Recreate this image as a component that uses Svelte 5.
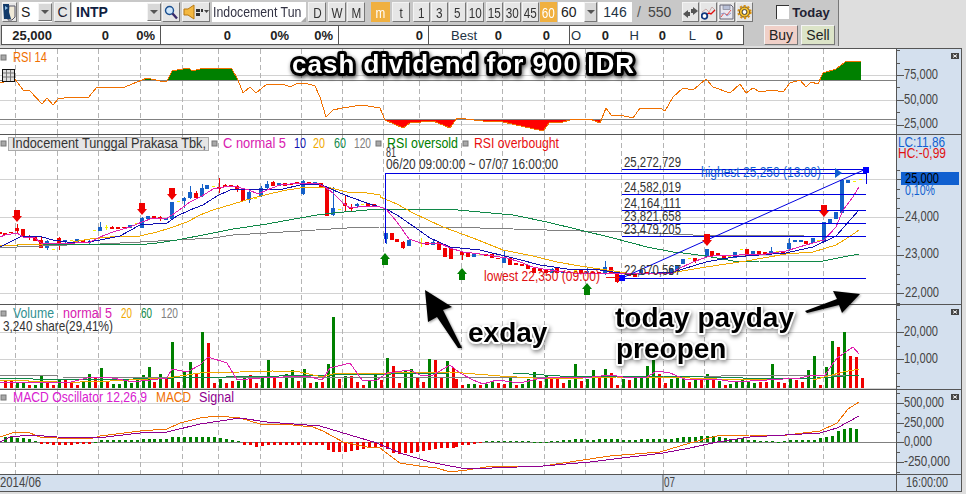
<script>
  const STEP = 17.9;
  // helpers: reference data is kept in 3x-crop coordinates with an origin
  const line = (ox, oy, a) => {
    const out = [];
    for (let i = 0; i < a.length; i += 2) out.push(`${Math.round(ox + a[i] / 3)},${Math.round(oy + a[i + 1] / 3)}`);
    return out;
  };
  const join = (...parts) => parts.flat().join(' ');

  const gridX = [15, 57, 98, 140, 182, 218, 260, 301, 342, 383, 419, 461, 502, 544, 585, 621, 663, 704, 746, 788, 823];

  // ---------- RSI ----------
  const rsiPts = [
    ...line(0, 0, [0,250,45,238,70,270,90,273,125,312,142,295,160,316,175,296,210,292,235,290,265,295,290,260,330,261,375,261,410,245,440,233,480,243,500,242,515,212,565,203,580,212,610,205,695,208,715,240,730,280,750,262,767,278,800,252,830,255,850,253,870,262,895,250,915,250,945,258,960,290,978,350,1000,330,1025,323,1085,315,1140,325,1155,360,1210,383,1230,368,1300,362,1350,383,1370,355,1449,362]),
    ...line(483, 0, [60,365,180,392,200,365,230,368,270,358,320,358,350,370,368,325,385,345,410,345,450,355,470,323,530,325,545,333,570,290,600,265,630,270,668,238,690,262,740,280,770,252,790,278,810,265,830,277,870,270,900,277,920,248,950,240,970,260,985,247,1005,252,1020,218,1060,208,1085,185,1133,183])
  ];
  const rsiLine = rsiPts.join(' ');
  const rsiHigh = `0,80 ${rsiLine} 861,80`;
  const rsiLow = `0,119 ${rsiLine} 861,119`;

  // ---------- candles ----------
  const cz3 = [
    [0,305,312,,,'r'],[16,310,316,,,'r'],[34,306,308,,,'r'],[52,295,302,282,310,'r'],[70,297,322,,,'r'],[88,320,325,315,330,'r'],[106,321,332,,,'r'],[124,330,353,322,353,'r'],[142,333,353,330,360,'b'],[160,357,358,,,'y'],[178,325,340,322,360,'r'],[196,329,335,329,340,'b'],[214,330,331,,,'y'],[232,328,335,,,'b'],[250,330,337,,,'r'],[268,335,340,330,345,'b'],[283,300,301,,,'y'],[301,291,303,277,303,'b'],[319,291,293,285,300,'y'],[337,290,296,288,298,'r'],[355,292,296,,,'r'],[373,291,294,,,'r'],[391,285,293,,,'b'],[409,280,281,,,'y'],[427,264,293,262,295,'b'],[445,258,268,,,'b'],[463,259,265,,,'r'],[481,260,268,258,272,'r'],[499,264,270,,,'b'],[517,217,268,,,'b'],[533,214,215,,,'y'],[551,203,213,200,235,'b'],[569,187,205,168,207,'b'],[587,188,203,183,205,'r'],[605,174,199,163,200,'b'],[622,165,176,,,'b'],[640,167,168,,,'y'],[658,170,177,143,190,'r'],[676,165,170,161,172,'r'],[694,165,168,,,'r'],[712,167,180,165,186,'r'],[730,177,213,,,'r'],[748,186,210,182,218,'b'],[766,204,205,,,'y'],[784,174,197,168,200,'b'],[800,162,175,153,177,'b'],[818,157,167,153,169,'r'],[836,160,168,,,'b'],[854,160,167,,,'r'],[872,161,163,,,'r'],[890,155,157,,,'r'],[908,153,193,150,195,'b'],[926,155,162,,,'r'],[944,157,162,,,'b'],[962,160,175,,,'r'],[980,172,257,,,'r'],[998,235,255,172,258,'b'],[1016,238,239,,,'y'],[1034,220,228,195,245,'r'],[1052,232,236,222,243,'r'],[1070,222,228,218,232,'b'],[1086,222,223,,,'y'],[1104,220,228,,,'r'],[1122,222,232,,,'r']
  ];
  const cz4 = [
    [17,310,327,308,342,'b'],[35,308,330,,,'r'],[52,328,337,,,'r'],[70,335,355,333,356,'r'],[88,330,348,,,'b'],[124,338,339,324,352,'y'],[142,335,345,,,'r'],[160,335,345,330,345,'b'],[178,337,360,,,'r'],[195,355,382,,,'r'],[212,355,388,350,388,'r'],[247,365,375,365,390,'r'],[265,370,380,,,'r'],[283,372,380,,,'b'],[301,372,373,,,'y'],[319,372,377,,,'r'],[337,372,385,,,'r'],[355,385,386,,,'r'],[373,380,398,362,400,'b'],[391,383,405,,,'r'],[409,400,405,,,'r'],[427,401,407,,,'r'],[445,405,418,,,'r'],[462,415,430,,,'r'],[480,418,422,,,'r'],[498,420,430,,,'r'],[516,418,430,413,430,'b'],[532,414,430,,,'r'],[550,422,430,,,'b'],[568,425,426,,,'y'],[586,420,430,,,'y'],[604,420,431,,,'r'],[622,423,430,415,430,'b'],[640,425,432,,,'r'],[658,425,432,,,'r'],[676,410,432,392,435,'b'],[694,412,430,,,'r'],[712,428,455,428,458,'r'],[748,430,437,,,'r'],[766,430,442,,,'r'],[784,420,435,,,'b'],[802,425,430,,,'r'],[820,425,430,,,'b'],[838,427,429,,,'r'],[855,425,432,,,'r'],[873,415,435,,,'b']
  ];
  const cz5 = [
    [32,405,422,,,'b'],[50,387,403,,,'b'],[68,385,386,,,'y'],[86,385,392,385,400,'r'],[104,375,376,,,'y'],[122,357,380,,,'b'],[137,362,378,,,'r'],[155,370,378,,,'r'],[173,378,385,,,'r'],[190,378,379,,,'y'],[208,365,385,,,'b'],[226,358,359,,,'y'],[244,358,378,,,'r'],[262,362,375,,,'b'],[280,362,372,,,'r'],[298,367,372,,,'r'],[316,362,372,350,372,'b'],[334,362,363,,,'y'],[352,365,370,,,'r'],[370,340,358,325,362,'b'],[388,330,336,,,'b'],[404,330,335,,,'b'],[421,333,342,,,'r'],[440,325,340,,,'b'],[457,330,331,,,'y'],[475,275,335,,,'b'],[493,267,280,,,'b'],[511,245,268,,,'b'],[529,150,250,,,'b'],[547,150,160,,,'b'],[565,152,153,,,'y'],[583,148,149,,,'y']
  ];
  const candleColor = { r: '#f00000', b: '#1560c8', y: '#f4f000' };
  const toCandle = (ox) => ([x, t, b, wt, wb, c]) => {
    const cx = Math.round(ox + x / 3);
    const top = Math.round(130 + t / 3);
    const bot = Math.max(top + 1, Math.round(130 + b / 3));
    return {
      x: cx, top, h: bot - top,
      wt: Math.round(130 + (wt ?? t) / 3),
      wb: Math.round(130 + (wb ?? b) / 3),
      fill: candleColor[c], doji: c === 'y'
    };
  };
  const candles = [...cz3.map(toCandle(0)), ...cz4.map(toCandle(380)), ...cz5.map(toCandle(666))];

  const ma5 = join(
    line(0,130,[0,322,15,315,50,308,70,320,106,325,124,338,150,340,178,340,200,342,250,335,270,335,300,320,340,305,390,290,427,275,460,265,500,265,517,255,545,235,569,215,605,197,640,178,690,167,712,172,748,180,775,192,800,180,840,165,900,160,950,160,975,172,1000,190,1030,220,1050,235,1075,230,1100,228,1140,232]),
    line(380,130,[17,237,50,275,88,328,124,338,160,340,178,340,210,355,250,365,300,373,340,378,380,385,420,395,460,410,490,418,530,422,580,428,640,428,700,428,760,432,800,430,880,428]),
    line(666,130,[30,420,80,395,122,380,160,375,220,375,300,372,360,362,400,350,440,340,475,330,510,290,530,240,560,200,580,172])
  );
  const ma10 = join(
    line(0,130,[0,352,30,335,60,322,90,318,125,322,160,330,200,335,265,335,300,330,360,318,420,285,500,280,530,258,570,240,610,225,650,198,690,180,720,178,850,178,900,165,960,162,1000,180,1050,200,1100,218,1150,235]),
    line(380,130,[17,237,50,255,100,288,150,325,210,350,300,360,400,385,480,405,560,418,660,420,720,428,790,432,880,425]),
    line(666,130,[50,418,120,395,200,380,280,375,360,368,440,350,510,318,580,240])
  );
  const ma20 = join(
    line(0,130,[0,345,50,345,130,343,200,338,270,328,330,320,420,318,470,305,510,295,560,275,600,255,640,240,700,222,760,205,820,190,860,180,920,172,980,172,1040,185,1100,190,1140,195]),
    line(380,130,[0,200,50,222,100,250,190,290,280,325,370,360,460,378,530,395,600,408,660,418,740,428,820,432,880,428]),
    line(666,130,[30,425,120,410,240,392,360,372,440,365,510,345,550,320,580,300])
  );
  const ma60 = join(
    line(0,130,[0,347,110,343,200,343,415,345,470,340,530,330,610,315,700,298,800,282,900,265,950,255,1000,248,1100,240]),
    line(380,130,[0,237,200,238,300,245,400,255,500,275,600,300,700,325,800,350,880,365]),
    line(666,130,[50,370,120,378,200,392,280,392,400,397,470,392,530,382,580,372])
  );
  const ma120 = join(
    line(0,130,[0,352,50,350,200,345,300,342,420,335,530,330,640,325,700,315,800,310,900,303,1040,295]),
    line(380,130,[0,292,200,292,400,298,600,302,730,307,880,312]),
    line(666,130,[80,315,415,315])
  );

  const fibY = [169, 194, 210, 223, 236, 278];
  const fibLabels = [
    ['25,272,729', 167], ['24,582,019', 192], ['24,164,111', 208], ['23,821,658', 221], ['23,479,205', 234], ['22,670,567', 275]
  ];
  const downArrows = [[17,210],[142,203],[172,188],[707,234],[824,205]];
  const upArrows = [[385,253],[462,268],[587,283]];

  // ---------- volume ----------
  const vol6 = [-243,-240,248,248,-255,255,228,-245,-255,240,-240,-248,-255,245,222,-230,204,-245,252,252,240,248,240,225,201,-245,222,-230,126,-245,215,186,-222,96,-129,-248,236,-248,-243,243,228,-225,-250,232,180,-228,-245,222,210,-242,207,-250,245,-245,192,51,-236,228,-228,-245,-255,240,225,-240,174,-198,-248,213,208,-232,-245,177,-180,-230,183,-204];
  const vol7 = [-237,-255,252,252,-255,252,243,-250,-252,234,-255,252,237,216,-243,225,-236,-234,-248,240,192,-243,237,210,-230,207,-220,-255,237,-240,232,234,198,180,-222,-248,237,234,230,-245,240,-240,222,-240,243,-255,252,243,240,245,248,-245,-245,192,-246,-250,237,-240,-245,210,168,-255,201,123,-141,96,-168,-171,-234];
  const toBar = (ox, x0) => (v, i) => ({
    x: Math.round(ox + (x0 + i * STEP) / 3) - 1,
    y: Math.round(300 + Math.abs(v) / 3),
    h: Math.round((264 - Math.abs(v)) / 3),
    fill: v > 0 ? '#008000' : '#f00000'
  });
  const volBars = [...vol6.map(toBar(0, 16)), ...vol7.map(toBar(450, 18))];

  const vma5 = join(
    line(0,300,[0,245,60,250,130,245,200,250,260,235,320,230,400,245,450,240,500,235,517,207,560,217,600,195,625,170,680,190,710,240,780,235,850,230,920,228,965,240,990,205,1050,190,1085,240,1130,240,1160,220,1230,210,1260,225,1300,225,1350,195]),
    line(450,300,[30,218,70,240,100,252,140,240,210,248,260,238,320,230,400,235,480,225,540,235,590,230,620,214,660,220,710,240,800,238,850,245,950,240,1050,235,1090,225,1125,225,1160,175,1210,140,1228,162])
  );
  const vma20 = join(
    line(0,300,[0,240,170,247,240,245,330,243,500,235,600,220,720,215,820,212,900,215,965,232,1000,223,1350,215]),
    line(450,300,[150,228,300,238,500,232,640,232,800,237,1000,240,1090,240,1180,215,1228,207])
  );
  const vma60 = join(
    line(0,300,[0,235,100,237,400,238,520,235,1000,225,1350,220]),
    line(450,300,[190,220,330,228,640,228,1000,237,1100,235,1228,225])
  );
  const vma120 = join(
    line(0,300,[0,225,170,224,170,230,1350,235]),
    line(450,300,[1228,226])
  );

  // ---------- MACD ----------
  const hist6 = [411,412,414,414,418,423,431,432,434,434,434,434,432,432,432,426,420,420,420,420,420,420,420,417,417,418,418,418,412,412,411,411,411,411,411,411,413,417,419,423,435,435,441,437,434,434,434,434,434,434,434,434,434,434,451,455,455,455,452,450,447,444,442,441,447,458,461,459,459,456,453,449,447,443,444,444];
  const hist7 = [441,436,434,431,429,423,423,423,423,423,423,423,423,425,426,425,423,423,421,419,418,417,419,420,418,418,417,417,419,419,419,418,418,418,418,418,418,413,412,411,410,408,408,408,411,413,416,416,414,419,420,422,424,424,425,424,421,420,420,421,421,414,411,408,393,387,384,387];
  const toHist = (ox, x0) => (v, i) => {
    const top = Math.round(300 + Math.min(v, 427) / 3);
    const bot = Math.round(300 + Math.max(v, 427) / 3);
    return { x: Math.round(ox + (x0 + i * STEP) / 3) - 1, y: top, h: Math.max(1, bot - top), fill: v < 427 ? '#008000' : '#f00000' };
  };
  const histBars = [...hist6.map(toHist(0, 16)), ...hist7.map(toHist(450, 18))];
  const macd = join(
    line(0,300,[0,410,45,397,90,400,120,410,170,415,270,418,300,408,420,393,500,387,540,370,600,355,650,347,720,355,780,373,880,375,940,380,970,393,1030,425,1100,442,1140,445,1200,490,1258,497,1310,503,1350,515]),
    line(450,300,[50,510,130,498,280,497,400,480,480,468,630,455,720,430,800,408,900,405,1010,405,1110,393,1160,368,1195,328,1228,307])
  );
  const signal = join(
    line(0,300,[0,425,30,412,90,406,170,412,290,415,420,400,500,395,600,372,720,355,800,365,960,377,1050,405,1130,430,1200,460,1290,485,1350,498]),
    line(450,300,[50,507,280,497,420,485,640,460,720,445,800,425,900,410,1110,400,1160,385,1228,348])
  );

  // ---------- labels ----------
  const rsiLegend = [[13,62,34,'#f07000','RSI 14']];
  const priceLegend = [
    [12,148,194,'#333','Indocement Tunggal Prakasa Tbk,'],
    [223,148,63,'#d820b0','C normal 5'],[294,148,12,'#1010b0','10'],[313,148,12,'#f0a800','20'],[334,148,12,'#108848','60'],[354,148,17,'#808080','120'],
    [387,148,71,'#008000','RSI oversold'],[474,148,85,'#e81010','RSI overbought'],
    [386,157,10,'#333','81'],[386,169,172,'#333','06/20 09:00:00 ~ 07/07 16:00:00']
  ];
  const volLegend = [
    [13,318,41,'#309090','Volume'],[63,318,49,'#d820b0','normal 5'],[121,318,11,'#f0a800','20'],[141,318,11,'#108848','60'],[161,318,17,'#808080','120'],
    [3,331,110,'#333','3,240 share(29,41%)']
  ];
  const macdLegend = [[13,402,134,'#d820d0','MACD Oscillator 12,26,9'],[156,402,35,'#f07000','MACD'],[199,402,35,'#900090','Signal']];
  const legendDots = { rsi: [[1,55]], price: [[1,141],[212,141],[376,141],[463,141]], vol: [[1,311]], macd: [[1,395]] };

  const axisTicks = (majors, step, top, bottom) => {
    const out = [];
    const m0 = majors[0];
    for (let y = m0 - Math.floor((m0 - top) / step) * step; y < bottom; y += step) {
      const isMajor = majors.some((v) => Math.abs(v - y) < step / 2);
      out.push({ y: Math.round(y), len: isMajor ? 7 : 3 });
    }
    return out;
  };
  const axes = {
    rsi: { ticks: axisTicks([75, 100, 124.5], 12.4, 49, 134), labels: [[904,79,34,'75,000'],[904,104,34,'50,000'],[904,128,34,'25,000']] },
    price: { ticks: axisTicks([179, 217, 255, 293], 9.5, 165, 304), labels: [[905,221,34,'24,000'],[905,258,34,'23,000'],[905,297,34,'22,000']] },
    vol: { ticks: axisTicks([332, 359], 13.5, 305, 389), labels: [[904,336,34,'20,000'],[904,363,34,'10,000']] },
    macd: { ticks: axisTicks([403, 423, 442, 462], 9.8, 390, 474), labels: [[904,407,40,'500,000'],[904,427,40,'250,000'],[904,446,28,'0,000'],[904,466,46,'-250,000']] }
  };

  // ---------- toolbar ----------
  const intervals = [
    ['D',308,18],['W',328,18],['M',347,18],['m',371,19,true],['t',392,18],['1',413,17],['3',431,17],['5',449,17],
    ['10',467,17],['15',486,17],['30',504,17],['45',522,17],['60',540,17,true]
  ].map(([t, x, w, on], i, all) => ({ t, w, on, gap: i ? x - all[i - 1][1] - all[i - 1][2] : 0 }));

  const quote = [
    { w: 159, items: [[50,'25,000'],[57,'0'],[46,'0%']] },
    { w: 178, items: [[70,'0'],[58,'0%'],[44,'0%']] },
    { w: 90, items: [[84,'0']] },
    { w: 141, items: [[48,'Best',1],[25,'0'],[48,'0']] },
    { w: 173, items: [[11,'O',1],[28,'0'],[30,'H',1],[27,'0'],[30,'L',1],[27,'0']] }
  ];
</script>

{#snippet texts(list)}
  {#each list as [x, y, w, color, label]}
    <text {x} {y} textLength={w} lengthAdjust="spacingAndGlyphs" fill={color}>{label}</text>
  {/each}
{/snippet}

{#snippet grid(top, h, ys)}
  {#each ys as y}
    <line x1="0" x2="896" y1={y + 0.5} y2={y + 0.5} class="hgrid" />
  {/each}
  {#each gridX as x}
    <line x1={x + 0.5} x2={x + 0.5} y1={top} y2={top + h} class="vgrid" />
  {/each}
{/snippet}

{#snippet dots(list)}
  {#each list as [x, y]}
    <rect {x} {y} width="5" height="5" class="dot" />
  {/each}
{/snippet}

{#snippet axis(top, h, data, closeY)}
  <svg class="axis" width="64" height={h} viewBox="897 {top} 64 {h}">
    {#each data.ticks as t}
      <line x1="897" x2={897 + t.len} y1={t.y + 0.5} y2={t.y + 0.5} class="tick" />
    {/each}
    {#each data.labels as [x, y, w, label]}
      <text {x} {y} textLength={w} lengthAdjust="spacingAndGlyphs" fill="#444">{label}</text>
    {/each}
    {#if closeY}
      <rect x="951" y={closeY} width="8" height="6" fill="#444" />
      <path d="M953 {closeY + 1.5}l4 3m0-3l-4 3" stroke="#fff" stroke-width="1" />
    {/if}
  </svg>
{/snippet}

<div class="app">
  <header class="toolbar">
    <div class="row1">
      <button class="btn ic1" aria-label="profile">
        <svg width="13" height="18" viewBox="0 0 13 18">
          <path d="M6 3h6v11l-3 3H5z" fill="#f0ead8" stroke="#556" />
          <path d="M0 1h6v8l2 7H1z" fill="#123a6a" />
          <path d="M2 3l3 2-3 2z" fill="#8fc0e8" />
        </svg>
      </button>
      <div class="field sbox">
        <span class="stype">S</span>
        <button class="btn drop" aria-label="open"><i class="caret"></i></button>
      </div>
      <button class="btn cbtn">C</button>
      <div class="field code">
        <b>INTP</b>
        <button class="btn drop" aria-label="open"><i class="caret"></i></button>
      </div>
      <button class="btn search" aria-label="search">
        <svg width="14" height="15" viewBox="0 0 14 15">
          <circle cx="5.5" cy="5.5" r="4" fill="#cfe6fa" stroke="#1a4f90" stroke-width="1.4" />
          <path d="M8.5 8.5l4.5 5" stroke="#3a2a6a" stroke-width="2.4" />
        </svg>
      </button>
      <button class="btn speaker" aria-label="sound">
        <svg width="26" height="16" viewBox="0 0 26 16">
          <path d="M1 5h4l6-4v14l-6-4H1z" fill="#f4b840" stroke="#b87810" />
          <rect x="13" y="5" width="4" height="3" fill="#333" />
          <rect x="13" y="9" width="4" height="3" fill="#333" />
          <rect x="18" y="5" width="2" height="3" fill="#333" />
          <path d="M21 6h5l-2.5 3z" fill="#444" />
        </svg>
      </button>
      <div class="field name"><span>Indocement Tun</span><i class="corner"></i></div>
      <div class="intervals">
        {#each intervals as it}
          <button class="btn int" class:on={it.on} style:width="{it.w}px" style:margin-left="{it.gap}px"><span>{it.t}</span></button>
        {/each}
      </div>
      <div class="field count">60</div>
      <button class="btn drop wide" aria-label="open"><i class="caret"></i></button>
      <div class="field total">146</div>
      <span class="slash">/</span>
      <span class="max">550</span>
      <div class="tools">
        <button class="btn tool" aria-label="arrows">
          <svg width="15" height="15" viewBox="0 0 15 15">
            <path d="M0 9l5-4v2h2v4H5v2zM15 6l-5-4v2H8v4h2v2z" fill="#555" />
          </svg>
        </button>
        <button class="btn tool" aria-label="chart">
          <svg width="15" height="16" viewBox="0 0 15 16">
            <path d="M1 8l4-3 3 3 3-5 3 3" fill="none" stroke="#c8a8a8" />
            <path d="M5 11l3-2 2 1 4-4" fill="none" stroke="#e01010" stroke-width="1.4" />
            <circle cx="3.5" cy="12" r="2.8" fill="#fff" stroke="#103a80" stroke-width="1.8" />
          </svg>
        </button>
        <button class="btn tool" aria-label="save">
          <svg width="15" height="16" viewBox="0 0 15 16">
            <path d="M1 1h11l2 2v12H1z" fill="#e8e8f0" stroke="#667" />
            <rect x="4" y="1.5" width="7" height="4" fill="#b8c0d8" stroke="#778" stroke-width=".6" />
            <path d="M2 13l3-4 3 2 4-5" fill="none" stroke="#e05050" />
            <path d="M2 10l3-1 3 3 4-3" fill="none" stroke="#90a0d0" />
          </svg>
        </button>
        <button class="btn tool" aria-label="settings">
          <svg width="16" height="16" viewBox="0 0 16 16">
            <circle cx="8" cy="8" r="5.5" fill="#f4c030" stroke="#604010" stroke-width="1" />
            <circle cx="8" cy="8" r="6.6" fill="none" stroke="#d89010" stroke-width="2" stroke-dasharray="2.2 2" />
            <circle cx="8" cy="8" r="2.6" fill="#fff" stroke="#333" />
          </svg>
        </button>
      </div>
      <label class="today"><i class="box"></i>Today</label>
    </div>
    <div class="row2">
      <div class="quote">
        {#each quote as g}
          <div class="qgroup" style:width="{g.w}px">
            {#each g.items as [w, t, light]}
              <span class:light style:width="{w}px">{t}</span>
            {/each}
          </div>
        {/each}
      </div>
      <button class="btn order buy">Buy</button>
      <button class="btn order sell">Sell</button>
    </div>
  </header>

  <main class="chart">
    <section class="pane">
      <svg class="plot" width="896" height="85" viewBox="0 49 896 85">
        {@render grid(49, 85, [75, 100, 124])}
        <clipPath id="hi"><rect x="0" y="49" width="896" height="31" /></clipPath>
        <clipPath id="lo"><rect x="0" y="119" width="896" height="15" /></clipPath>
        <polygon points={rsiHigh} fill="#008000" clip-path="url(#hi)" shape-rendering="crispEdges" />
        <polygon points={rsiLow} fill="#ff0000" clip-path="url(#lo)" shape-rendering="crispEdges" />
        <line x1="0" x2="896" y1="80.5" y2="80.5" class="level" />
        <line x1="0" x2="896" y1="119.5" y2="119.5" class="level" />
        <polyline points={rsiLine} class="ln" stroke="#f07000" />
        {@render dots(legendDots.rsi)}
        {@render texts(rsiLegend)}
        <g class="tableicon">
          <rect x="2.5" y="69.5" width="12" height="12" fill="#e0e0e0" stroke="#111" />
          <path d="M3 73h11M6.5 70v11M10.5 70v11M3 77h11" stroke="#777" fill="none" />
        </g>
      </svg>
      {@render axis(49, 85, axes.rsi, 53)}
    </section>

    <section class="pane">
      <svg class="plot" width="896" height="169" viewBox="0 135 896 169">
        {@render grid(135, 169, [179, 217, 255, 293])}
        {#each candles as c}
          <rect x={c.x} y={c.wt} width="1" height={Math.max(1, c.wb - c.wt)} fill={c.fill} shape-rendering="crispEdges" />
          <rect x={c.x - (c.doji ? 1 : 2)} y={c.top} width={c.doji ? 3 : 4} height={c.h} fill={c.fill} shape-rendering="crispEdges" />
        {/each}
        <polyline points={ma120} class="ln" stroke="#808080" />
        <polyline points={ma60} class="ln" stroke="#108848" />
        <polyline points={ma20} class="ln" stroke="#f0a800" />
        <polyline points={ma10} class="ln" stroke="#1010b0" />
        <polyline points={ma5} class="ln" stroke="#e020b0" />

        <polyline points="385,243 385,173 866,173" class="fib" />
        {#each fibY as y}
          <line x1="622" x2="866" y1={y + 0.5} y2={y + 0.5} class="fib" />
        {/each}
        <line x1="622" x2="866" y1="278" y2="169" stroke="#0000e0" />
        <line x1="866.5" x2="866.5" y1="169" y2="184" class="fib" />
        <rect x="619" y="275" width="6" height="6" fill="#0000ff" />
        <rect x="863" y="167" width="6" height="6" fill="#0000ff" />
        <path d="M835 168l7 5-7 5z" fill="#1060d0" />
        <line x1="606" x2="620" y1="277.5" y2="277.5" stroke="#e81010" />

        {#each downArrows as [x, y]}
          <path d="M{x - 3} {y}h6v6h2l-5 6-5-6h2z" fill="#f00000" />
        {/each}
        {#each upArrows as [x, y]}
          <path d="M{x} {y}l5 6h-2v6h-6v-6h-2z" fill="#008000" />
        {/each}

        {@render dots(legendDots.price)}
        <rect x="8.5" y="137.5" width="200" height="13" fill="#e6e6e6" stroke="#aaa" />
        {@render texts(priceLegend)}
        {#each fibLabels as [t, y]}
          <text x="624" {y} textLength="57" lengthAdjust="spacingAndGlyphs" fill="#333">{t}</text>
        {/each}
        <text x="701" y="177" textLength="120" lengthAdjust="spacingAndGlyphs" fill="#1060d0">highest 25,250 (13:00)</text>
        <text x="484" y="281" textLength="116" lengthAdjust="spacingAndGlyphs" fill="#e01010">lowest 22,350 (09:00)</text>
      </svg>
      <svg class="axis" width="64" height="169" viewBox="897 135 64 169">
        {#each axes.price.ticks as t}
          <line x1="897" x2={897 + t.len} y1={t.y + 0.5} y2={t.y + 0.5} class="tick" />
        {/each}
        {#each axes.price.labels as [x, y, w, label]}
          <text {x} {y} textLength={w} lengthAdjust="spacingAndGlyphs" fill="#444">{label}</text>
        {/each}
        <text x="898" y="147" textLength="47" lengthAdjust="spacingAndGlyphs" fill="#1060d0">LC:11,86</text>
        <text x="898" y="158" textLength="48" lengthAdjust="spacingAndGlyphs" fill="#e01010">HC:-0,99</text>
        <rect x="901" y="172" width="58" height="13" fill="#1060d0" />
        <text x="905" y="183" textLength="34" lengthAdjust="spacingAndGlyphs" fill="#000">25,000</text>
        <text x="905" y="195" textLength="30" lengthAdjust="spacingAndGlyphs" fill="#1060d0">0,10%</text>
      </svg>
    </section>

    <section class="pane">
      <svg class="plot" width="896" height="84" viewBox="0 305 896 84">
        {@render grid(305, 84, [332, 359, 388])}
        {#each volBars as b}
          <rect x={b.x} y={b.y} width="3" height={b.h} fill={b.fill} shape-rendering="crispEdges" />
        {/each}
        <polyline points={vma120} class="ln" stroke="#808080" />
        <polyline points={vma60} class="ln" stroke="#108848" />
        <polyline points={vma20} class="ln" stroke="#f0a800" />
        <polyline points={vma5} class="ln" stroke="#e020b0" />
        {@render dots(legendDots.vol)}
        {@render texts(volLegend)}
      </svg>
      {@render axis(305, 84, axes.vol, 309)}
    </section>

    <section class="pane">
      <svg class="plot" width="896" height="84" viewBox="0 390 896 84">
        {@render grid(390, 84, [403, 423, 462])}
        <line x1="0" x2="896" y1="442.5" y2="442.5" class="level" />
        {#each histBars as b}
          <rect x={b.x} y={b.y} width="3" height={b.h} fill={b.fill} shape-rendering="crispEdges" />
        {/each}
        <polyline points={macd} class="ln" stroke="#f07000" />
        <polyline points={signal} class="ln" stroke="#900090" />
        {@render dots(legendDots.macd)}
        {@render texts(macdLegend)}
      </svg>
      {@render axis(390, 84, axes.macd, 394)}
    </section>

    <section class="pane timerow">
      <svg class="plot" width="896" height="16" viewBox="0 475 896 16">
        <text x="0" y="487" textLength="41" lengthAdjust="spacingAndGlyphs" fill="#444">2014/06</text>
        <line x1="663" x2="663" y1="475" y2="491" stroke="#555" />
        <text x="664" y="487" textLength="11" lengthAdjust="spacingAndGlyphs" fill="#444">07</text>
      </svg>
      <svg class="axis" width="64" height="16" viewBox="897 475 64 16">
        <text x="906" y="487" textLength="42" lengthAdjust="spacingAndGlyphs" fill="#444">16:00:00</text>
      </svg>
    </section>
  </main>

  <svg class="notes" width="966" height="494" viewBox="0 0 966 494">
    <text x="292" y="73" textLength="342" lengthAdjust="spacing" class="headline">cash dividend for 900 IDR</text>
    <path d="M425 290l27 17-9 3 19 38h-4l-21-31-9 5z" class="pointer" />
    <path d="M860 294l-27-3 4 8-32 12 2 2 32-8 3 8z" class="pointer" />
    <text x="468" y="342" class="note">exday</text>
    <text x="615" y="327" class="note">today payday</text>
    <text x="616" y="358" class="note">preopen</text>
  </svg>
</div>

<style>
  :global(body) {
    margin: 0;
    background: #dedede;
  }
  .app {
    position: relative;
    width: 966px;
    height: 494px;
    overflow: hidden;
    font-family: "Liberation Sans", Arial, sans-serif;
    color: #222;
  }
  button {
    font: inherit;
    color: inherit;
    padding: 0;
    margin: 0;
  }
  .toolbar {
    box-sizing: border-box;
    width: 839px;
    height: 46px;
    padding-top: 2px;
    background: #c8c8c8;
    border-right: 1px solid #777;
  }
  .row1 {
    display: flex;
    align-items: stretch;
    height: 20px;
    font-size: 14px;
  }
  .btn {
    box-sizing: border-box;
    display: flex;
    align-items: center;
    justify-content: center;
    background: #e6e6e6;
    border: 1px solid;
    border-color: #f4f4f4 #777 #777 #f4f4f4;
  }
  .field {
    box-sizing: border-box;
    display: flex;
    align-items: center;
    background: #fff;
    position: relative;
  }
  .ic1 { width: 15px; margin-left: 2px; }
  .sbox { width: 33px; margin-left: 2px; padding-left: 2px; }
  .stype { flex: 1; }
  .drop { width: 14px; height: 18px; background: #d8d8d8; }
  .caret {
    width: 0;
    height: 0;
    border: 4px solid transparent;
    border-top: 4px solid #555;
    border-bottom: 0;
  }
  .cbtn { width: 17px; margin-left: 2px; color: #223; }
  .code { width: 89px; margin-left: 1px; padding-left: 4px; }
  .code b { flex: 1; color: #102040; }
  .search { width: 18px; margin-left: 1px; }
  .speaker { width: 28px; margin-left: 2px; }
  .name {
    width: 94px;
    margin-left: 2px;
    padding-left: 1px;
    white-space: nowrap;
    overflow: hidden;
    font-size: 14px;
    color: #334;
  }
  .name span {
    display: inline-block;
    transform: scaleX(0.88);
    transform-origin: left center;
  }
  .corner {
    position: absolute;
    right: 0;
    bottom: 0;
    border-left: 5px solid transparent;
    border-bottom: 5px solid #aaa;
  }
  .intervals { display: flex; margin-left: 2px; }
  .int { font-size: 15px; color: #333; overflow: hidden; }
  .int span { display: inline-block; transform: scaleX(0.78); }
  .int.on { background: #f0b040; color: #fff; border-color: #f0b040; }
  .count { width: 26px; margin-left: 1px; padding-left: 3px; }
  .wide { width: 13px; height: 20px; }
  .total { width: 34px; margin-left: 1px; justify-content: center; color: #234; }
  .slash { margin-left: 5px; color: #555; line-height: 20px; width: 4px; }
  .max { margin-left: 7px; color: #444; line-height: 20px; }
  .tools { display: flex; gap: 1px; margin-left: 11px; }
  .tool { width: 17px; }
  .today {
    display: flex;
    align-items: center;
    gap: 3px;
    margin-left: 23px;
    font-weight: 700;
    font-size: 13px;
    color: #223;
  }
  .box {
    width: 12px;
    height: 13px;
    background: #fff;
    border-top: 1px solid #333;
    border-left: 1px solid #333;
  }
  .row2 {
    display: flex;
    height: 20px;
    margin-top: 3px;
    margin-left: 1px;
    font-size: 13px;
  }
  .quote {
    display: flex;
    box-sizing: border-box;
    width: 743px;
    background: #fff;
    border: 1px solid #555;
  }
  .qgroup {
    box-sizing: border-box;
    display: flex;
    align-items: center;
    border-right: 1px solid #555;
    font-weight: 700;
  }
  .qgroup:last-child { border-right: 0; }
  .qgroup span { display: block; text-align: right; white-space: nowrap; }
  .qgroup .light { font-weight: 400; color: #234; }
  .order { width: 34px; margin-left: 20px; font-size: 14px; }
  .buy { background: #f0d0c8; }
  .sell { background: #dce4c8; margin-left: 3px; }

  .chart {
    box-sizing: border-box;
    width: 962px;
    height: 444px;
    margin-top: 2px;
    border-top: 1px solid #555;
    border-right: 1px solid #555;
  }
  .pane {
    display: flex;
    border-bottom: 1px solid #555;
  }
  .plot {
    display: block;
    background: #fff;
    font-size: 14px;
  }
  .axis {
    display: block;
    background: #d4e0ee;
    border-left: 1px solid #555;
    font-size: 15px;
  }
  .timerow .plot { background: #d4e0ee; }
  .hgrid { stroke: #d2d2d2; }
  .vgrid { stroke: #b4b4b4; stroke-dasharray: 5 3; }
  .level { stroke: #808080; }
  .tick { stroke: #555; }
  .dot { fill: #a8a8a8; stroke: #777; }
  .ln {
    fill: none;
    stroke-width: 1;
    shape-rendering: crispEdges;
  }
  .fib {
    fill: none;
    stroke: #0000e0;
    shape-rendering: crispEdges;
  }
  .notes {
    position: absolute;
    left: 0;
    top: 0;
    pointer-events: none;
  }
  .headline {
    font: 700 26px "Liberation Sans", Arial, sans-serif;
    fill: #fff;
    stroke: #000;
    stroke-width: 6px;
    paint-order: stroke;
    stroke-linejoin: round;
    filter: drop-shadow(1px 2px 2px rgba(0, 0, 0, 0.7));
  }
  .note {
    font: 700 28px "Liberation Sans", Arial, sans-serif;
    fill: #000;
    stroke: #fff;
    stroke-width: 4px;
    paint-order: stroke;
    stroke-linejoin: round;
    filter: drop-shadow(1px 2px 2px rgba(0, 0, 0, 0.45));
  }
  .pointer {
    fill: #000;
    filter: drop-shadow(1px 1px 1px rgba(0, 0, 0, 0.4));
  }
</style>
